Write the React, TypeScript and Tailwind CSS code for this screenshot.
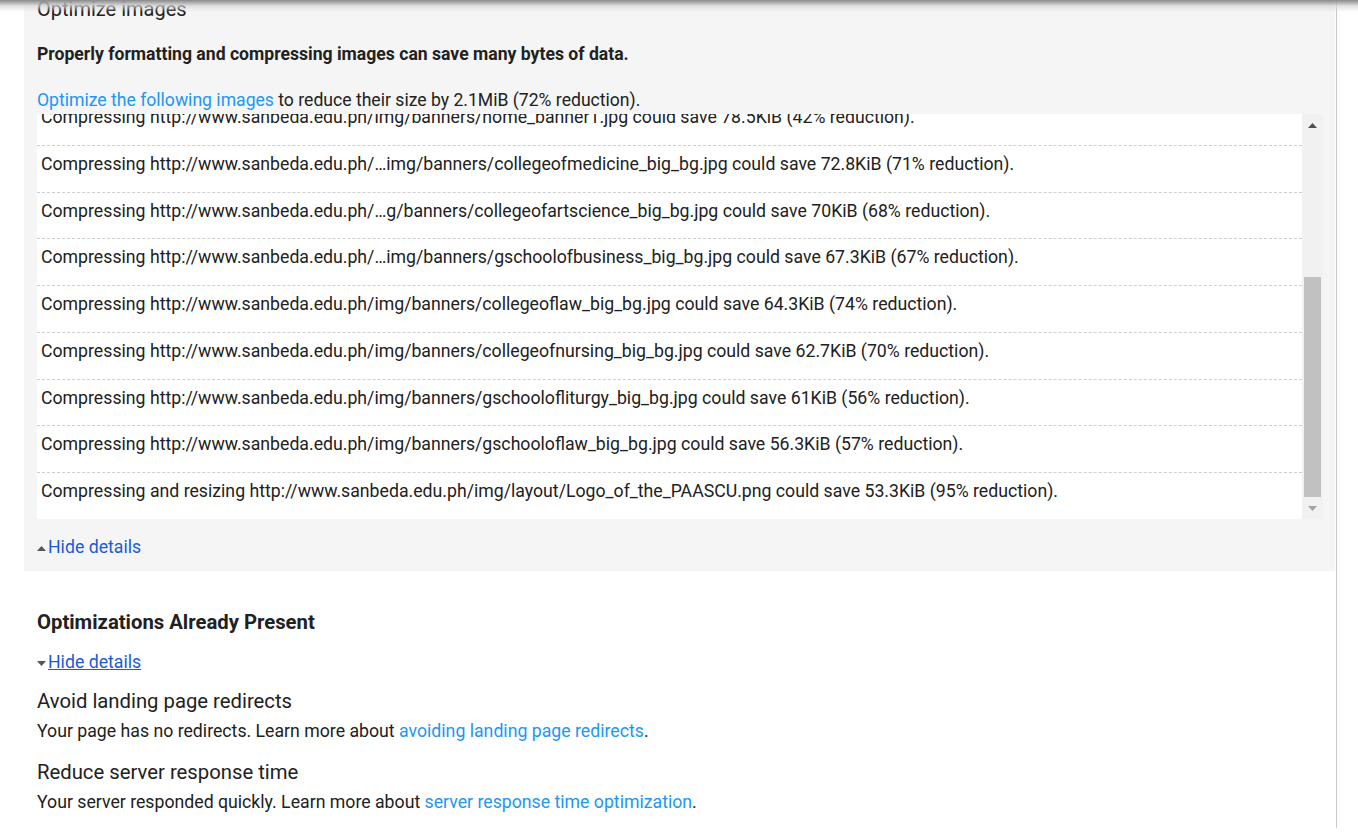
import React from 'react';

interface ImageRow {
  text: string;
}

const rows: ImageRow[] = [
  { text: 'Compressing http://www.sanbeda.edu.ph/img/banners/home_banner1.jpg could save 78.5KiB (42% reduction).' },
  { text: 'Compressing http://www.sanbeda.edu.ph/…img/banners/collegeofmedicine_big_bg.jpg could save 72.8KiB (71% reduction).' },
  { text: 'Compressing http://www.sanbeda.edu.ph/…g/banners/collegeofartscience_big_bg.jpg could save 70KiB (68% reduction).' },
  { text: 'Compressing http://www.sanbeda.edu.ph/…img/banners/gschoolofbusiness_big_bg.jpg could save 67.3KiB (67% reduction).' },
  { text: 'Compressing http://www.sanbeda.edu.ph/img/banners/collegeoflaw_big_bg.jpg could save 64.3KiB (74% reduction).' },
  { text: 'Compressing http://www.sanbeda.edu.ph/img/banners/collegeofnursing_big_bg.jpg could save 62.7KiB (70% reduction).' },
  { text: 'Compressing http://www.sanbeda.edu.ph/img/banners/gschoolofliturgy_big_bg.jpg could save 61KiB (56% reduction).' },
  { text: 'Compressing http://www.sanbeda.edu.ph/img/banners/gschooloflaw_big_bg.jpg could save 56.3KiB (57% reduction).' },
  { text: 'Compressing and resizing http://www.sanbeda.edu.ph/img/layout/Logo_of_the_PAASCU.png could save 53.3KiB (95% reduction).' },
];

const Triangle: React.FC<{ up?: boolean; className?: string }> = ({ up, className }) => (
  <svg width="9" height="5" viewBox="0 0 9 5" className={className}>
    {up ? <path d="M0 5 L4.5 0 L9 5 Z" fill="currentColor" /> : <path d="M0 0 L4.5 5 L9 0 Z" fill="currentColor" />}
  </svg>
);

const OptimizedRule: React.FC<{ title: string; lead: string; link: string }> = ({ title, lead, link }) => (
  <div>
    <h4 className="text-[20.3px] leading-6 text-[#212121]">{title}</h4>
    <p className="mt-[6px] text-[17.7px] leading-6 text-[#212121]">
      {lead} <a className="text-[#2196f3]">{link}</a>.
    </p>
  </div>
);

const App: React.FC = () => {
  return (
    <div className="relative h-[833px] overflow-hidden bg-white font-['Roboto',sans-serif] text-[#212121]">
      {/* header shadow */}
      <div className="pointer-events-none absolute inset-x-0 top-0 z-10 h-[12px] bg-gradient-to-b from-[#8a8a8a] via-[#d6d6d6]/70 to-transparent" />

      <div className="h-full w-[1337px] border-r border-[#c8c8c8]">
        {/* Optimize images panel */}
        <div className="-mt-[5px] ml-[24px] w-[1311px] bg-[#f5f5f5] px-[13px] pb-[12px]">
          <h3 className="text-[20px] leading-[28px]">Optimize images</h3>
          <p className="mt-[19px] text-[17.6px] font-bold leading-6">
            Properly formatting and compressing images can save many bytes of data.
          </p>
          <p className="mt-[22px] text-[17.6px] leading-6">
            <a className="text-[#2196f3]">Optimize the following images</a> to reduce their size by 2.1MiB (72% reduction).
          </p>

          {/* scroll box */}
          <div className="mt-[2px] flex h-[405px] w-[1286px] overflow-hidden bg-white">
            <div className="min-w-0 flex-1 overflow-hidden">
              <ul className="-mt-[15px]">
                {rows.map((row, i) => (
                  <li
                    key={i}
                    className={`px-[4px] pt-[6px] pb-[15.75px] text-[17.7px] leading-6 whitespace-nowrap ${
                      i < rows.length - 1 ? 'border-b border-dashed border-[#cfcfcf]' : ''
                    }`}
                  >
                    {row.text}
                  </li>
                ))}
              </ul>
            </div>
            <div className="flex w-[21px] flex-col items-center bg-[#f1f1f1]">
              <div className="flex h-[17px] w-full items-center justify-center text-[#505050]">
                <Triangle up className="mt-[6px]" />
              </div>
              <div className="flex w-full flex-1 flex-col justify-end px-[2px]">
                <div className="mb-[5px] h-[220px] w-full bg-[#c1c1c1]" />
              </div>
              <div className="flex h-[17px] w-full items-center justify-center text-[#a3a3a3]">
                <Triangle className="-mt-[4px]" />
              </div>
            </div>
          </div>

          <div className="mt-[16px] flex items-center text-[17.7px] leading-6">
            <Triangle up className="mr-[2px] mt-[2px] text-[#555]" />
            <a className="text-[#1a5ad6]">Hide details</a>
          </div>
        </div>

        {/* Optimizations Already Present */}
        <div className="ml-[24px] px-[13px] pt-[39px]">
          <h3 className="text-[20.3px] font-bold leading-6">Optimizations Already Present</h3>
          <div className="mt-[16px] flex items-center text-[17.7px] leading-6">
            <Triangle className="mr-[2px] mt-[3px] text-[#555]" />
            <a className="text-[#1a5ad6] underline">Hide details</a>
          </div>
          <div className="mt-[15px] space-y-[17px]">
            <OptimizedRule
              title="Avoid landing page redirects"
              lead="Your page has no redirects. Learn more about"
              link="avoiding landing page redirects"
            />
            <OptimizedRule
              title="Reduce server response time"
              lead="Your server responded quickly. Learn more about"
              link="server response time optimization"
            />
          </div>
        </div>
      </div>
    </div>
  );
};

export default App;
